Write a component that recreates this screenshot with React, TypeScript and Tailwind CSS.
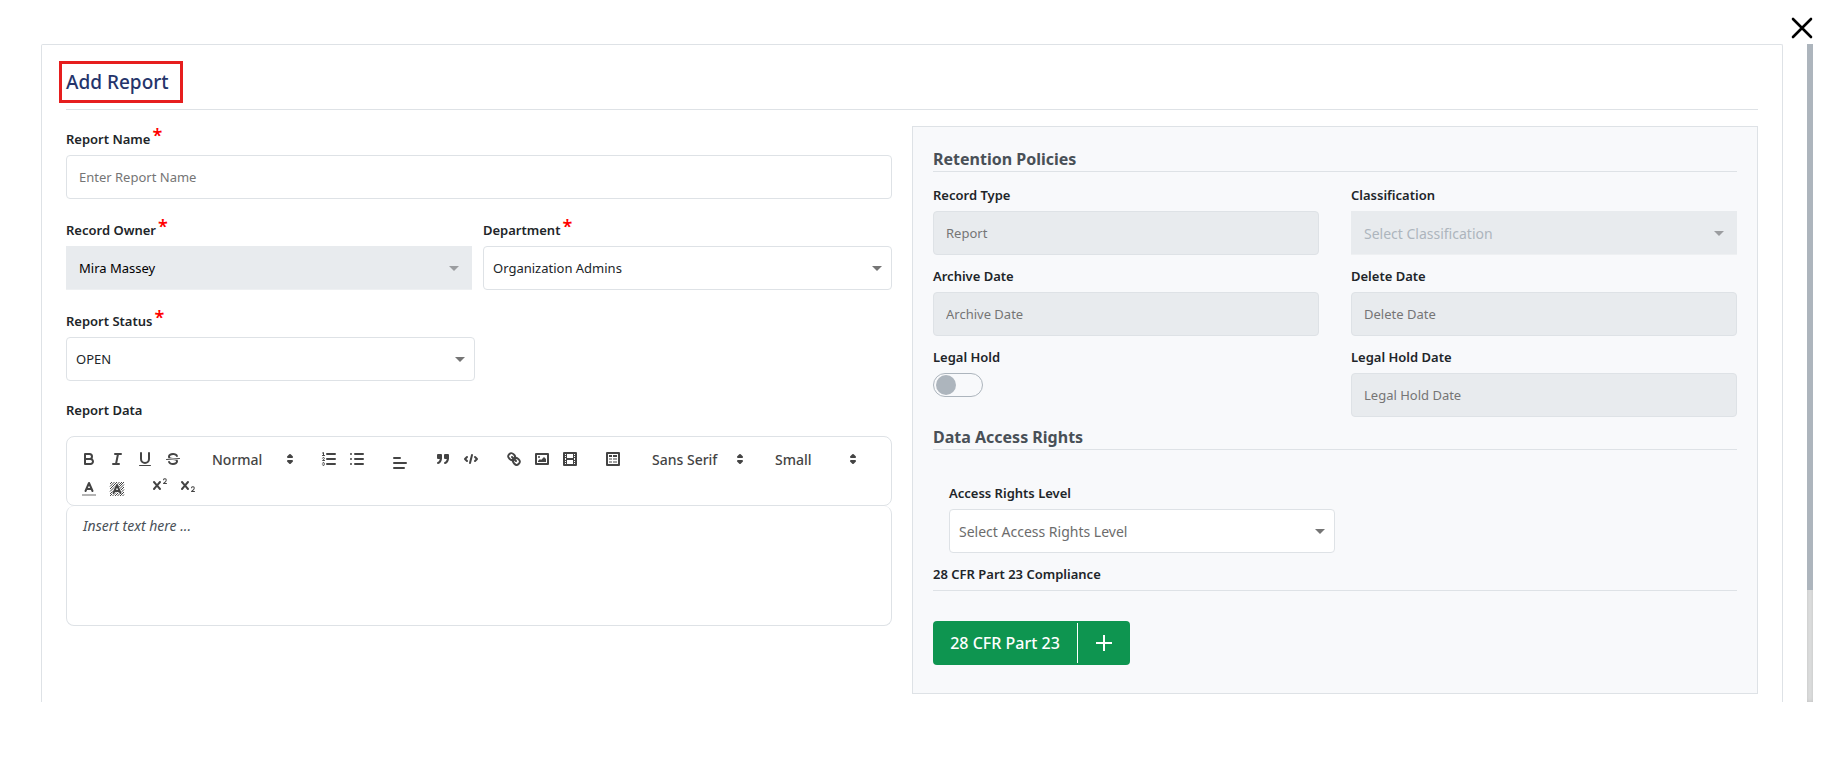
import type { ReactNode } from "react";

const labelClass = "flex h-5 items-center text-[13px] leading-5 font-semibold text-[#212529]";

function Label({ htmlFor, required, children }: { htmlFor: string; required?: boolean; children: ReactNode }) {
  return (
    <label htmlFor={htmlFor} className={labelClass}>
      {children}
      {required && <span className="ml-0.5 self-start text-lg leading-3 font-semibold text-[#ff0000]">*</span>}
    </label>
  );
}

function Field({ id, label, required, children }: { id: string; label: string; required?: boolean; children: ReactNode }) {
  return (
    <div className="flex flex-col gap-1.5">
      <Label htmlFor={id} required={required}>
        {label}
      </Label>
      {children}
    </div>
  );
}

function TextInput({ id, placeholder, disabled }: { id: string; placeholder: string; disabled?: boolean }) {
  return (
    <input
      id={id}
      type="text"
      disabled={disabled}
      placeholder={placeholder}
      className="h-11 w-full rounded border border-[#dee2e6] bg-white px-3 text-[13px] text-[#212529] placeholder:text-[#757575] disabled:bg-[#e8ebee]"
    />
  );
}

function Caret({ className }: { className: string }) {
  return (
    <svg viewBox="0 0 10 5" aria-hidden="true" className={`pointer-events-none absolute top-5 h-[5px] w-2.5 ${className}`}>
      <path d="M0 0h10L5 5z" fill="currentColor" />
    </svg>
  );
}

function Select({ id, value, tone = "text-[13px] text-[#212529]" }: { id: string; value: string; tone?: string }) {
  return (
    <div className="relative">
      <select
        id={id}
        defaultValue={value}
        className={`h-11 w-full appearance-none rounded border border-[#dee2e6] bg-white pt-0.5 pr-7 pl-[9px] ${tone}`}
      >
        <option>{value}</option>
      </select>
      <Caret className="right-2.5 text-[#757575]" />
    </div>
  );
}

function DisabledSelect({ id, value, tone }: { id: string; value: string; tone: string }) {
  return (
    <div className="relative">
      <select
        id={id}
        disabled
        defaultValue={value}
        className={`h-11 w-full appearance-none border-b border-[#eef0f2] bg-[#e8ebee] pt-0.5 pr-8 pl-[13px] opacity-100 ${tone}`}
      >
        <option>{value}</option>
      </select>
      <Caret className="right-[13px] text-[#9b9da0]" />
    </div>
  );
}

function Tool({ label, low, children }: { label: string; low?: boolean; children: ReactNode }) {
  return (
    <button type="button" aria-label={label} className={`flex h-6 w-7 justify-center ${low ? "pt-[7px]" : "pt-[3px]"}`}>
      <svg
        viewBox="0 0 18 18"
        className="size-[18px] shrink-0"
        fill="none"
        stroke="#444"
        strokeWidth="2"
        strokeLinecap="round"
        strokeLinejoin="round"
      >
        {children}
      </svg>
    </button>
  );
}

function Picker({ label, value, width }: { label: string; value: string; width: string }) {
  return (
    <div className={`relative h-6 ${width}`}>
      <select
        aria-label={label}
        defaultValue={value}
        className="h-6 w-full appearance-none pl-2.5 text-sm leading-6 font-medium text-[#444]"
      >
        <option>{value}</option>
      </select>
      <svg
        viewBox="0 0 18 18"
        aria-hidden="true"
        className="pointer-events-none absolute top-[3px] right-px size-[18px]"
        fill="#444"
        stroke="#444"
        strokeWidth="2"
        strokeLinejoin="round"
      >
        <path d="M7 11l2 2 2-2zM7 7l2-2 2 2z" />
      </svg>
    </div>
  );
}

function Group({ children }: { children: ReactNode }) {
  return <div className="mr-[15px] flex">{children}</div>;
}

function Toolbar() {
  return (
    <div className="flex flex-wrap gap-y-0.5 rounded-lg border border-[#dee2e6] px-2 pt-2.5 pb-2">
      <Group>
        <Tool label="Bold">
          <path d="M5,4H9.5A2.5,2.5,0,0,1,12,6.5v0A2.5,2.5,0,0,1,9.5,9H5V4Z" />
          <path d="M5,9h5.500A2.5,2.5,0,0,1,13,11.5v0A2.5,2.5,0,0,1,10.5,14H5V9Z" />
        </Tool>
        <Tool label="Italic">
          <path d="M7 4h6M5 14h6M8 14L10 4" />
        </Tool>
        <Tool label="Underline">
          <path d="M5,3V9a4.012,4.012,0,0,0,4,4H9a4.012,4.012,0,0,0,4-4V3" />
          <rect fill="#444" stroke="none" x="3" y="15" width="12" height="1" rx="0.5" />
        </Tool>
        <Tool label="Strikethrough">
          <path strokeWidth="1" d="M15.5 8.500L2.500 9.500" />
          <path
            fill="#444"
            stroke="none"
            d="M9.007,8C6.542,7.791,6,7.519,6,6.5,6,5.792,7.283,5,9,5c1.571,0,2.765.679,2.969,1.309a1,1,0,0,0,1.9-.617C13.356,4.106,11.354,3,9,3,6.2,3,4,4.538,4,6.5a3.2,3.2,0,0,0,.5,1.843Z"
          />
          <path
            fill="#444"
            stroke="none"
            d="M8.984,10C11.457,10.208,12,10.479,12,11.5c0,.708-1.283,1.5-3,1.5-1.571,0-2.765-.679-2.969-1.309a1,1,0,1,0-1.9.617C4.644,13.894,6.646,15,9,15c2.8,0,5-1.538,5-3.5a3.2,3.2,0,0,0-.5-1.843Z"
          />
        </Tool>
      </Group>
      <Group>
        <Picker label="Text style" value="Normal" width="w-[98px]" />
      </Group>
      <Group>
        <Tool label="Numbered list">
          <path d="M7 4h8M7 9h8M7 14h8" />
          <path strokeWidth="1" d="M2.500 5.500h2M3.500 5.500v-3l-1 .5" />
          <path strokeWidth="1" d="M4.5,10.5h-2c0-.234,1.85-1.076,1.85-2.234A0.959,0.959,0,0,0,2.5,8.156" />
          <path
            strokeWidth="1"
            d="M2.5,14.846a0.959,0.959,0,0,0,1.85-.109A0.7,0.7,0,0,0,3.75,14a0.688,0.688,0,0,0,.6-0.736,0.959,0.959,0,0,0-1.85-.109"
          />
        </Tool>
        <Tool label="Bulleted list">
          <path d="M7 4h8M7 9h8M7 14h8M3 4h0M3 9h0M3 14h0" />
        </Tool>
      </Group>
      <Group>
        <Tool label="Align" low>
          <path d="M3 4h6M3 9h12M3 14h10" />
        </Tool>
      </Group>
      <Group>
        <Tool label="Quote">
          <g fill="#444">
            <rect x="4" y="5" width="3" height="3" />
            <rect x="11" y="5" width="3" height="3" />
            <path d="M7,8c0,4.031-3,5-3,5" />
            <path d="M14,8c0,4.031-3,5-3,5" />
          </g>
        </Tool>
        <Tool label="Code">
          <path d="M5 7L3 9l2 2M13 7l2 2-2 2" />
          <path d="M10 5L8 13" />
        </Tool>
      </Group>
      <Group>
        <Tool label="Link">
          <path d="M7 7l4 4" />
          <path d="M8.9,4.577a3.476,3.476,0,0,1,.36,4.679A3.476,3.476,0,0,1,4.577,8.9C3.185,7.5,2.035,6.4,4.217,4.217S7.5,3.185,8.9,4.577Z" />
          <path d="M13.423,9.1a3.476,3.476,0,0,0-4.679-.36,3.476,3.476,0,0,0,.36,4.679c1.392,1.392,2.5,2.542,4.679.36S14.815,10.5,13.423,9.1Z" />
        </Tool>
        <Tool label="Image">
          <rect x="3" y="4" width="12" height="10" />
          <circle fill="#444" stroke="none" cx="6" cy="7" r="1" />
          <path fill="#444" stroke="none" d="M5 12v-1l2-2 1 1 3-3 2 2v3z" />
        </Tool>
        <Tool label="Video">
          <rect x="3" y="3" width="12" height="12" />
          <path
            fill="#444"
            stroke="none"
            d="M5 3h1v12H5zM12 3h1v12h-1zM5 8h8v2H5zM3 5h3v1H3zM3 7h3v1H3zM3 10h3v1H3zM3 12h3v1H3zM12 5h3v1h-3zM12 7h3v1h-3zM12 10h3v1h-3zM12 12h3v1h-3z"
          />
        </Tool>
      </Group>
      <Group>
        <Tool label="Table">
          <rect x="3" y="3" width="12" height="12" />
          <path fill="#444" stroke="none" d="M5 5h3v2H5zM9 5h4v2H9z" />
          <path fill="#444" stroke="none" opacity="0.5" d="M5 8h3v2H5zM9 8h4v2H9zM5 11h3v2H5zM9 11h4v2H9z" />
        </Tool>
      </Group>
      <Group>
        <Picker label="Font" value="Sans Serif" width="w-[108px]" />
      </Group>
      <Group>
        <Picker label="Text size" value="Small" width="w-[98px]" />
      </Group>
      <Group>
        <Tool label="Text colour" low>
          <path opacity="0.4" strokeLinecap="butt" d="M2 15h14" />
          <path d="M5.500 11L9 3l3.500 8M11.630 9H6.380" />
        </Tool>
        <Tool label="Background colour" low>
          <path
            strokeWidth="1"
            strokeLinecap="butt"
            d="M2 4l2-2M2 6.500L6.500 2M2 9l7-7M2 11.500L11.500 2M2 14L14 2M2 16L16 2M4.500 16L16 4.500M7 16l9-9M9.500 16l6.500-6.500M12 16l4-4M14.500 16l1.500-1.500"
          />
          <path stroke="#fff" strokeWidth="3" d="M5.500 13L9 5l3.500 8M11.630 11H6.380" />
          <path d="M5.500 13L9 5l3.500 8M11.630 11H6.380" />
        </Tool>
      </Group>
      <Group>
        <Tool label="Superscript">
          <g fill="#444" stroke="none">
            <path d="M15.5,7H13.861a4.015,4.015,0,0,0,1.914-2.975,1.8,1.8,0,0,0-1.6-1.751A1.922,1.922,0,0,0,12.021,3.7a.5.5,0,1,0,.957.291,.917,.917,0,0,1,1.053-.725,.81,.81,0,0,1,.744.762c0,1.077-1.164,1.925-1.934,2.486A1.423,1.423,0,0,0,12,7.5a.5.5,0,0,0,.5.5h3A.5.5,0,0,0,15.5,7Z" />
            <path d="M9.651,5.241a1,1,0,0,0-1.41.108L6,7.964,3.759,5.349a1,1,0,1,0-1.519,1.3L4.683,9.5,2.241,12.35a1,1,0,1,0,1.519,1.3L6,11.036,8.241,13.65a1,1,0,0,0,1.519-1.3L7.317,9.5,9.759,6.651A1,1,0,0,0,9.651,5.241Z" />
          </g>
        </Tool>
        <Tool label="Subscript">
          <g fill="#444" stroke="none">
            <path
              transform="translate(0 8)"
              d="M15.5,7H13.861a4.015,4.015,0,0,0,1.914-2.975,1.8,1.8,0,0,0-1.6-1.751A1.922,1.922,0,0,0,12.021,3.7a.5.5,0,1,0,.957.291,.917,.917,0,0,1,1.053-.725,.81,.81,0,0,1,.744.762c0,1.077-1.164,1.925-1.934,2.486A1.423,1.423,0,0,0,12,7.5a.5.5,0,0,0,.5.5h3A.5.5,0,0,0,15.5,7Z"
            />
            <path d="M9.651,5.241a1,1,0,0,0-1.41.108L6,7.964,3.759,5.349a1,1,0,1,0-1.519,1.3L4.683,9.5,2.241,12.35a1,1,0,1,0,1.519,1.3L6,11.036,8.241,13.65a1,1,0,0,0,1.519-1.3L7.317,9.5,9.759,6.651A1,1,0,0,0,9.651,5.241Z" />
          </g>
        </Tool>
      </Group>
    </div>
  );
}

function SectionHeading({ children }: { children: ReactNode }) {
  return (
    <h2 className="border-b border-[#dee2e6] text-base leading-6 font-bold text-[#495057]">{children}</h2>
  );
}

function ReportForm() {
  return (
    <div className="flex min-w-0 flex-col pt-[19px] pr-5">
      <div className="flex flex-col gap-[21px]">
        <Field id="report-name" label="Report Name" required>
          <TextInput id="report-name" placeholder="Enter Report Name" />
        </Field>
        <div className="grid grid-cols-2 gap-x-2 gap-y-[21px]">
          <div className="pr-[3px]">
            <Field id="record-owner" label="Record Owner" required>
              <DisabledSelect id="record-owner" value="Mira Massey" tone="text-[13px] text-black" />
            </Field>
          </div>
          <Field id="department" label="Department" required>
            <Select id="department" value="Organization Admins" />
          </Field>
          <Field id="report-status" label="Report Status" required>
            <Select id="report-status" value="OPEN" />
          </Field>
        </div>
      </div>
      <div className="mt-[19px] flex flex-col">
        <Label htmlFor="report-data">Report Data</Label>
        <div className="mt-4">
          <Toolbar />
          <textarea
            id="report-data"
            placeholder="Insert text here ..."
            className="block h-[120px] w-full resize-none rounded-lg border border-t-0 border-[#dee2e6] px-4 py-[11px] text-sm leading-[18px] placeholder:text-[#495057] placeholder:italic"
          />
        </div>
      </div>
    </div>
  );
}

function PolicyPanel() {
  return (
    <section className="mt-4 min-w-0 border border-[#dee2e6] bg-[#f8f9fb] px-5 pt-5 pb-7">
      <SectionHeading>Retention Policies</SectionHeading>
      <div className="mt-[13px] grid grid-cols-2 gap-x-8 gap-y-[11px]">
        <Field id="record-type" label="Record Type">
          <TextInput id="record-type" placeholder="Report" disabled />
        </Field>
        <Field id="classification" label="Classification">
          <DisabledSelect id="classification" value="Select Classification" tone="text-sm text-[#adb5bd]" />
        </Field>
        <Field id="archive-date" label="Archive Date">
          <TextInput id="archive-date" placeholder="Archive Date" disabled />
        </Field>
        <Field id="delete-date" label="Delete Date">
          <TextInput id="delete-date" placeholder="Delete Date" disabled />
        </Field>
        <Field id="legal-hold" label="Legal Hold">
          <input
            id="legal-hold"
            type="checkbox"
            role="switch"
            className="h-6 w-[50px] appearance-none rounded-full border border-[#adb5bd] bg-[#f8f9fb] px-0.5 py-px before:block before:size-5 before:rounded-full before:bg-[#adb5bd]"
          />
        </Field>
        <Field id="legal-hold-date" label="Legal Hold Date">
          <TextInput id="legal-hold-date" placeholder="Legal Hold Date" disabled />
        </Field>
      </div>

      <div className="mt-2">
        <SectionHeading>Data Access Rights</SectionHeading>
      </div>
      <div className="mt-[33px] grid grid-cols-2 gap-x-8 pl-4">
        <div className="-mr-2">
          <Field id="access-level" label="Access Rights Level">
            <Select id="access-level" value="Select Access Rights Level" tone="text-sm text-[#6c6c6c]" />
          </Field>
        </div>
      </div>

      <h3 className="mt-[11px] border-b border-[#dee2e6] pb-1.5 text-[13px] leading-5 font-semibold text-[#212529]">
        28 CFR Part 23 Compliance
      </h3>
      <button
        type="button"
        className="mt-[30px] flex h-11 items-center rounded bg-[#0e9550] py-0.5 text-base font-medium text-white"
      >
        <span className="flex h-full w-36 items-center justify-center">28 CFR Part 23</span>
        <span className="flex h-full w-[53px] items-center justify-center border-l border-white">
          <svg viewBox="0 0 18 18" aria-hidden="true" className="size-[18px]" stroke="#fff" strokeWidth="2">
            <path d="M9 1v16M1 9h16" />
          </svg>
        </span>
      </button>
    </section>
  );
}

export default function App() {
  return (
    <div className="bg-white pr-4 pl-[41px] font-['Noto_Sans',sans-serif]">
      <header className="flex h-11 items-end justify-end pb-[5px]">
        <button type="button" aria-label="Close">
          <svg viewBox="0 0 22 22" className="size-[22px]" stroke="#000" strokeWidth="2.600" strokeLinecap="round">
            <path d="M2 2l18 18M20 2L2 20" />
          </svg>
        </button>
      </header>
      <div className="flex gap-6">
        <main className="min-w-0 flex-1 rounded-t-xs border border-b-0 border-[#dee2e6] px-6 pt-4 pb-2">
          <div className="border-b border-[#dee2e6] pb-1.5">
            <h1 className="-ml-[7px] inline-flex h-[42px] items-center border-[3px] border-[#e61e1e] px-1 pr-[11px] align-top text-[19px] leading-none font-medium text-[#25346b]">
              Add Report
            </h1>
          </div>
          <form className="grid grid-cols-2">
            <ReportForm />
            <PolicyPanel />
          </form>
        </main>
        <div aria-hidden="true" className="w-1.5 bg-[#e0e1e1] shadow-[inset_0_0_4px_rgba(0,0,0,0.15)]">
          <div className="h-[83%] bg-[#adb5bd]" />
        </div>
      </div>
    </div>
  );
}
